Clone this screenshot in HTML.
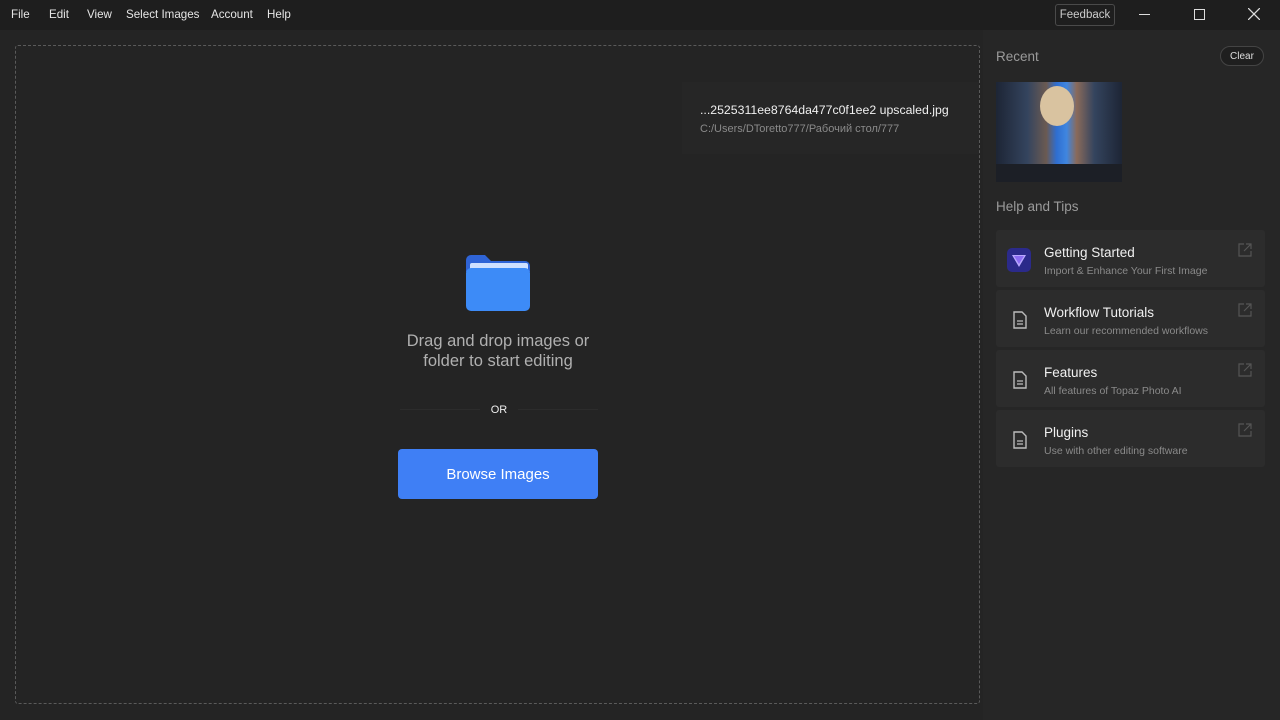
<!DOCTYPE html>
<html><head><meta charset="utf-8"><style>
*{margin:0;padding:0;box-sizing:border-box}
body{width:1280px;height:720px;background:#242424;font-family:"Liberation Sans",sans-serif;color:#ddd;position:relative;overflow:hidden}
.top{position:absolute;left:0;top:0;width:1280px;height:30px;background:#1e1e1e}
.menu{position:absolute;top:8px;font-size:11.6px;color:#e6e6e6}
.drop{position:absolute;left:15px;top:45px;width:965px;height:659px;border:1px dashed #5a5a5a;border-radius:3px}
.recentfile{position:absolute;left:682px;top:82px;width:297px;height:72px;background:#262626}
.side{position:absolute;left:983px;top:30px;width:297px;height:690px;background:#262626}
.card{position:absolute;left:996px;width:269px;height:57px;background:#2c2c2c;border-radius:3px}
.card .t{position:absolute;left:48px;top:15px;font-size:13.5px;color:#f0f0f0}
.card .s{position:absolute;left:48px;top:35px;font-size:10.5px;color:#8a8a8a}
.card svg.ext{position:absolute;right:13px;top:13px}
.card svg.doc{position:absolute;left:17px;top:21px}
</style></head><body>
<div class="top"></div>
<div class="menu" style="left:11px">File</div>
<div class="menu" style="left:49px">Edit</div>
<div class="menu" style="left:87px">View</div>
<div class="menu" style="left:126px">Select Images</div>
<div class="menu" style="left:211px">Account</div>
<div class="menu" style="left:267px">Help</div>
<div style="position:absolute;left:1055px;top:4px;width:60px;height:22px;border:1px solid #4a4a4a;border-radius:3px;font-size:11.5px;color:#ccc;text-align:center;line-height:21px">Feedback</div>
<div style="position:absolute;left:1139px;top:14px;width:11px;height:1px;background:#ddd"></div>
<div style="position:absolute;left:1194px;top:9px;width:11px;height:11px;border:1.5px solid #ddd"></div>
<svg style="position:absolute;left:1248px;top:8px" width="12" height="12"><path d="M0 0L12 12M12 0L0 12" stroke="#ddd" stroke-width="1.3"/></svg>

<div class="drop"></div>
<div class="recentfile">
<div style="position:absolute;left:18px;top:21px;font-size:12.3px;color:#f0f0f0">...2525311ee8764da477c0f1ee2 upscaled.jpg</div>
<div style="position:absolute;left:18px;top:41px;font-size:11px;color:#8a8a8a">C:/Users/DToretto777/Рабочий стол/777</div>
</div>

<svg style="position:absolute;left:466px;top:254px" width="64" height="58"><path d="M0 6a5 5 0 0 1 5-5h14l6 6h34a5 5 0 0 1 5 5v6H0z" fill="#2f64d6"/><rect x="4" y="9" width="58" height="12" rx="2" fill="#cfe0ff"/><rect x="0" y="14" width="64" height="43" rx="5" fill="#3d8bf7"/></svg>
<div style="position:absolute;left:393px;top:331px;width:210px;text-align:center;font-size:16.5px;line-height:20px;color:#b0b0b0">Drag and drop images or folder to start editing</div>
<div style="position:absolute;left:400px;top:409px;width:80px;height:1px;background:#2c2c2c"></div>
<div style="position:absolute;left:518px;top:409px;width:80px;height:1px;background:#2c2c2c"></div>
<div style="position:absolute;left:480px;top:404px;width:38px;text-align:center;font-size:11px;color:#eee">OR</div>
<div style="position:absolute;left:398px;top:449px;width:200px;height:50px;background:#3f7ff5;border-radius:4px;text-align:center;line-height:52px;font-size:15px;color:#fff">Browse Images</div>

<div class="side"></div>
<div style="position:absolute;left:996px;top:49px;font-size:13.5px;color:#9a9a9a">Recent</div>
<div style="position:absolute;left:1220px;top:46px;width:44px;height:20px;border:1px solid #444;border-radius:10px;font-size:10px;color:#ddd;text-align:center;line-height:19px;background:#1f1f1f">Clear</div>
<div style="position:absolute;left:996px;top:82px;width:126px;height:100px;background:linear-gradient(90deg,#1d2535 0%,#34445e 25%,#6b5a52 40%,#2f6ed0 48%,#3f86e0 56%,#8a6a5a 64%,#34445e 78%,#1d2535 100%);overflow:hidden">
<div style="position:absolute;left:44px;top:4px;width:34px;height:40px;border-radius:50%;background:#d9c3a0"></div>
<div style="position:absolute;left:0;top:82px;width:126px;height:18px;background:#1c1f26"></div></div>
<div style="position:absolute;left:996px;top:199px;font-size:13.5px;color:#9a9a9a">Help and Tips</div>

<div class="card" style="top:230px">
<svg style="position:absolute;left:11px;top:18px" width="24" height="24"><rect width="24" height="24" rx="5" fill="#2b2a8a"/><path d="M5 7h14l-7 12z" fill="#b9a8ff"/><path d="M7 8h10l-5 8z" fill="#8c6cf2"/></svg>
<div class="t">Getting Started</div><div class="s">Import &amp; Enhance Your First Image</div>
<svg class="ext" width="14" height="14"><path d="M6 1H1v12h12V8M8 1h5v5M13 1L6 8" stroke="#555" fill="none" stroke-width="1.2"/></svg></div>
<div class="card" style="top:290px">
<svg class="doc" width="14" height="18"><path d="M1 1h8l4 4v12H1z" stroke="#bbb" fill="none" stroke-width="1.4"/><path d="M4 10h6M4 13h6" stroke="#bbb" stroke-width="1.3"/></svg>
<div class="t">Workflow Tutorials</div><div class="s">Learn our recommended workflows</div>
<svg class="ext" width="14" height="14"><path d="M6 1H1v12h12V8M8 1h5v5M13 1L6 8" stroke="#555" fill="none" stroke-width="1.2"/></svg></div>
<div class="card" style="top:350px">
<svg class="doc" width="14" height="18"><path d="M1 1h8l4 4v12H1z" stroke="#bbb" fill="none" stroke-width="1.4"/><path d="M4 10h6M4 13h6" stroke="#bbb" stroke-width="1.3"/></svg>
<div class="t">Features</div><div class="s">All features of Topaz Photo AI</div>
<svg class="ext" width="14" height="14"><path d="M6 1H1v12h12V8M8 1h5v5M13 1L6 8" stroke="#555" fill="none" stroke-width="1.2"/></svg></div>
<div class="card" style="top:410px">
<svg class="doc" width="14" height="18"><path d="M1 1h8l4 4v12H1z" stroke="#bbb" fill="none" stroke-width="1.4"/><path d="M4 10h6M4 13h6" stroke="#bbb" stroke-width="1.3"/></svg>
<div class="t">Plugins</div><div class="s">Use with other editing software</div>
<svg class="ext" width="14" height="14"><path d="M6 1H1v12h12V8M8 1h5v5M13 1L6 8" stroke="#555" fill="none" stroke-width="1.2"/></svg></div>
</body></html>
